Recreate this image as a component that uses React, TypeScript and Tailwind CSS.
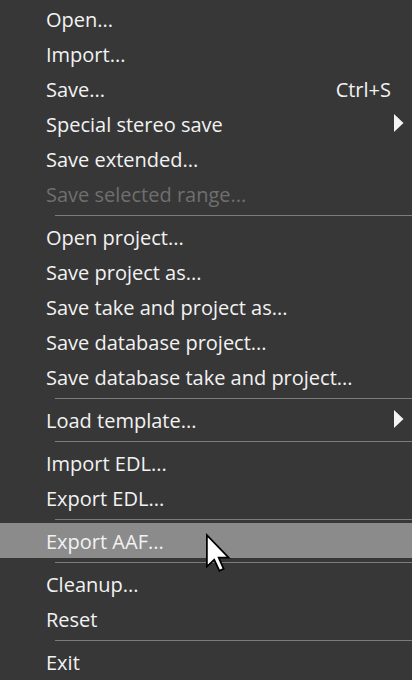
type Item =
	| { kind: "item"; label: string; shortcut?: string; submenu?: boolean; disabled?: boolean; active?: boolean }
	| { kind: "sep" };

const items: Item[] = [
	{ kind: "item", label: "Open..." },
	{ kind: "item", label: "Import..." },
	{ kind: "item", label: "Save...", shortcut: "Ctrl+S" },
	{ kind: "item", label: "Special stereo save", submenu: true },
	{ kind: "item", label: "Save extended..." },
	{ kind: "item", label: "Save selected range...", disabled: true },
	{ kind: "sep" },
	{ kind: "item", label: "Open project..." },
	{ kind: "item", label: "Save project as..." },
	{ kind: "item", label: "Save take and project as..." },
	{ kind: "item", label: "Save database project..." },
	{ kind: "item", label: "Save database take and project..." },
	{ kind: "sep" },
	{ kind: "item", label: "Load template...", submenu: true },
	{ kind: "sep" },
	{ kind: "item", label: "Import EDL..." },
	{ kind: "item", label: "Export EDL..." },
	{ kind: "sep" },
	{ kind: "item", label: "Export AAF...", active: true },
	{ kind: "sep" },
	{ kind: "item", label: "Cleanup..." },
	{ kind: "item", label: "Reset" },
	{ kind: "sep" },
	{ kind: "item", label: "Exit" },
];

function SubArrow() {
	return (
		<svg width="10" height="18" viewBox="0 0 10 18" className="shrink-0">
			<path d="M0 0 L9.5 9 L0 18 Z" fill="#f4f4f4" />
		</svg>
	);
}

function Cursor() {
	return (
		<svg
			width="27"
			height="41"
			viewBox="-1 -1 14 21"
			className="pointer-events-none absolute left-[204px] top-[532px]"
		>
			<path
				d="M0.5 0.5 L0.5 16.8 L4.3 13.2 L7 19 L9.2 18 L6.6 12.2 L11.8 12.2 Z"
				fill="#ffffff"
				stroke="#000000"
				strokeWidth="0.9"
				strokeLinejoin="miter"
			/>
		</svg>
	);
}

export default function App() {
	return (
		<div
			className="relative h-[680px] w-[412px] overflow-hidden bg-[#373737] pt-[1px] text-[20px] text-[#f2f2f2]"
			style={{ fontFamily: '"Open Sans", "Noto Sans", sans-serif' }}
		>
			{items.map((it, i) =>
				it.kind === "sep" ? (
					<div key={i} className="h-[8px] pt-[4px] pl-[55px]">
						<div className="h-px bg-[#7c7c7c]" />
					</div>
				) : (
					<div
						key={i}
						className={
							"flex h-[35px] items-center pl-[46px] pt-[2px] " +
							(it.active ? "bg-[#8b8b8b] " : "") +
							(it.disabled ? "text-[#6f6f6f]" : "")
						}
					>
						<span className="flex-1 whitespace-nowrap leading-none">{it.label}</span>
						{it.shortcut && <span className="pr-[21px] leading-none">{it.shortcut}</span>}
						{it.submenu && (
							<span className="-mt-[3px] pr-[8px]">
								<SubArrow />
							</span>
						)}
					</div>
				),
			)}
			<Cursor />
		</div>
	);
}
